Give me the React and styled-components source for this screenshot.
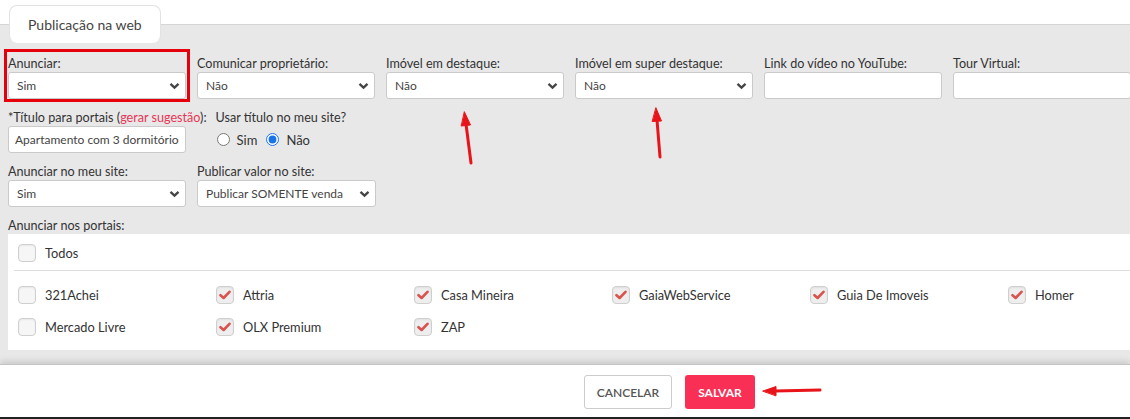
import React from "react";
import styled, { createGlobalStyle, css } from "styled-components";

const GlobalStyle = createGlobalStyle`
  body {
    margin: 0;
    background: #ffffff;
    font-family: Lato, "Open Sans", Arial, sans-serif;
  }
`;

const portals = [
  { name: "321Achei", checked: false },
  { name: "Attria", checked: true },
  { name: "Casa Mineira", checked: true },
  { name: "GaiaWebService", checked: true },
  { name: "Guia De Imoveis", checked: true },
  { name: "Homer", checked: true },
  { name: "Mercado Livre", checked: false },
  { name: "OLX Premium", checked: true },
  { name: "ZAP", checked: true },
];

const Chevron = () => (
  <svg width="11" height="8" viewBox="0 0 11 8">
    <polyline
      points="1.5,1.8 5.5,5.6 9.5,1.8"
      fill="none"
      stroke="#444"
      strokeWidth="2.3"
    />
  </svg>
);

const Select = ({ value, width }) => (
  <SelectBox $width={width}>
    <span>{value}</span>
    <Chevron />
  </SelectBox>
);

const Check = ({ checked }) => (
  <CheckBox $checked={checked}>
    {checked && (
      <svg width="12" height="10" viewBox="0 0 12 10">
        <path
          d="M1.5 5.2 L4.6 8 L10.5 1.8"
          fill="none"
          stroke="#d9534f"
          strokeWidth="2.6"
          strokeLinecap="round"
          strokeLinejoin="round"
        />
      </svg>
    )}
  </CheckBox>
);

const App = () => {
  return (
    <Page>
      <GlobalStyle />
      <TabBar>
        <Tab>Publicação na web</Tab>
      </TabBar>

      <Panel>
        <Row>
          <Field $highlight>
            <Label>Anunciar:</Label>
            <Select value="Sim" />
          </Field>
          <Field>
            <Label>Comunicar proprietário:</Label>
            <Select value="Não" />
          </Field>
          <Field>
            <Label>Imóvel em destaque:</Label>
            <Select value="Não" />
          </Field>
          <Field>
            <Label>Imóvel em super destaque:</Label>
            <Select value="Não" />
          </Field>
          <Field>
            <Label>Link do vídeo no YouTube:</Label>
            <TextBox />
          </Field>
          <Field>
            <Label>Tour Virtual:</Label>
            <TextBox />
          </Field>
        </Row>

        <Row>
          <Field $auto>
            <Label>
              *Título para portais (<Suggest>gerar sugestão</Suggest>):
            </Label>
            <TextBox defaultValue="Apartamento com 3 dormitórios à venda, 98 m²" />
          </Field>
          <Field $auto $shift>
            <Label>Usar título no meu site?</Label>
            <RadioRow>
              <RadioLabel>
                <Radio type="radio" name="usar" />
                Sim
              </RadioLabel>
              <RadioLabel>
                <Radio type="radio" name="usar" defaultChecked />
                Não
              </RadioLabel>
            </RadioRow>
          </Field>
        </Row>

        <Row>
          <Field>
            <Label>Anunciar no meu site:</Label>
            <Select value="Sim" />
          </Field>
          <Field>
            <Label>Publicar valor no site:</Label>
            <Select value="Publicar SOMENTE venda" width={179} />
          </Field>
        </Row>

        <Label>Anunciar nos portais:</Label>
        <PortalBox>
          <TodosRow>
            <CheckItem>
              <Check checked={false} />
              Todos
            </CheckItem>
          </TodosRow>
          <PortalGrid>
            {portals.map((p) => (
              <CheckItem key={p.name}>
                <Check checked={p.checked} />
                {p.name}
              </CheckItem>
            ))}
          </PortalGrid>
        </PortalBox>
        <HiddenLabel>Descrição para os portais (texto exibido no anúncio):</HiddenLabel>
      </Panel>

      <Footer>
        <CancelButton>Cancelar</CancelButton>
        <SaveButton>Salvar</SaveButton>
      </Footer>

      <Annotations width="1130" height="419" viewBox="0 0 1130 419">
        <g stroke="#e8141a" strokeWidth="3" fill="#e8141a" strokeLinecap="round">
          <line x1="471" y1="163" x2="466" y2="124" />
          <polygon points="464.5,112 470.5,125 461.5,126" strokeWidth="1" />
          <line x1="660" y1="157" x2="657" y2="120" />
          <polygon points="656,108 661.5,121 652.5,121.5" strokeWidth="1" />
          <line x1="820" y1="390" x2="775" y2="391" />
          <polygon points="763,391 776,386.5 776,395.5" strokeWidth="1" />
        </g>
      </Annotations>
    </Page>
  );
};

const Page = styled.div`
  position: relative;
  display: flex;
  flex-direction: column;
  width: 1130px;
  height: 419px;
  overflow: hidden;
`;

const TabBar = styled.div`
  display: flex;
  height: 24px;
  padding: 5px 0 0 9px;
  box-sizing: border-box;
`;

const Tab = styled.div`
  position: relative;
  z-index: 1;
  height: 38px;
  padding: 0 18px;
  display: flex;
  align-items: center;
  background: #ffffff;
  border: 1px solid #e2e2e2;
  border-bottom: none;
  border-radius: 8px;
  box-sizing: border-box;
  font-size: 14px;
  color: #444;
`;

const Panel = styled.div`
  flex: 1;
  min-height: 0;
  overflow: hidden;
  background: #e8e8e8;
  border-top: 1px solid #d6d6d6;
  padding: 30px 0 0 8px;
  box-sizing: border-box;
`;

const Row = styled.div`
  display: flex;
  gap: 11px;
  margin-bottom: 10px;
`;

const Field = styled.div`
  position: relative;
  display: flex;
  flex-direction: column;
  flex-shrink: 0;
  width: ${(p) => (p.$auto ? "auto" : "178px")};
  margin-left: ${(p) => (p.$shift ? "-2px" : "0")};

  ${(p) =>
    p.$highlight &&
    css`
      &::after {
        content: "";
        position: absolute;
        top: -6px;
        left: -4px;
        right: -4px;
        bottom: -3px;
        border: 3px solid #e5000b;
        pointer-events: none;
      }
    `}
`;

const Label = styled.div`
  height: 17px;
  line-height: 17px;
  font-size: 12.6px;
  color: #333;
  white-space: nowrap;
`;

const Suggest = styled.span`
  color: #e63757;
`;

const SelectBox = styled.div`
  width: ${(p) => (p.$width ? `${p.$width}px` : "178px")};
  height: 27px;
  display: flex;
  align-items: center;
  justify-content: space-between;
  padding: 0 5px 0 8px;
  box-sizing: border-box;
  background: #ffffff;
  border: 1px solid #cacaca;
  border-radius: 3px;
  font-size: 12px;
  color: #444;
  white-space: nowrap;
`;

const TextBox = styled.input.attrs({ type: "text" })`
  width: 178px;
  height: 27px;
  padding: 0 6px;
  box-sizing: border-box;
  background: #ffffff;
  border: 1px solid #cacaca;
  border-radius: 3px;
  font-family: inherit;
  font-size: 12px;
  color: #444;
  outline: none;
`;

const RadioRow = styled.div`
  display: flex;
  align-items: center;
  gap: 9px;
  height: 27px;
  padding-left: 1px;
`;

const RadioLabel = styled.label`
  display: flex;
  align-items: center;
  gap: 7px;
  font-size: 13px;
  color: #333;
`;

const Radio = styled.input`
  margin: 0;
  width: 13px;
  height: 13px;
  accent-color: #1a73e8;
`;

const PortalBox = styled.div`
  background: #ffffff;
  padding: 0 0 7px 6px;
`;

const TodosRow = styled.div`
  height: 37px;
  display: flex;
  align-items: center;
  padding: 2px 0 0 4px;
  box-sizing: border-box;
  border-bottom: 1px solid #dddddd;
`;

const PortalGrid = styled.div`
  display: grid;
  grid-template-columns: repeat(6, 198px);
  grid-auto-rows: 32px;
  padding: 8px 0 0 4px;
`;

const CheckItem = styled.div`
  display: flex;
  align-items: center;
  gap: 9px;
  font-size: 12.8px;
  color: #333;
  white-space: nowrap;
`;

const CheckBox = styled.span`
  width: 18px;
  height: 18px;
  box-sizing: border-box;
  display: inline-flex;
  align-items: center;
  justify-content: center;
  border: 1px solid #cfcfcf;
  border-radius: 4px;
  background: ${(p) => (p.$checked ? "#eeeeee" : "#f6f6f6")};
  box-shadow: inset 0 1px 2px rgba(0, 0, 0, 0.06);
`;

const HiddenLabel = styled(Label)`
  margin-top: 12px;
  color: #666;
`;

const Footer = styled.div`
  position: relative;
  z-index: 1;
  height: 55px;
  display: flex;
  align-items: flex-start;
  gap: 13px;
  padding: 10px 0 0 584px;
  box-sizing: border-box;
  background: #ffffff;
  border-top: 1px solid #c4c4c4;
  border-bottom: 2px solid #222;
  box-shadow: 0 -3px 6px rgba(0, 0, 0, 0.12);
`;

const buttonBase = css`
  height: 34px;
  box-sizing: border-box;
  border-radius: 3px;
  font-family: inherit;
  font-size: 12px;
  font-weight: 700;
  text-transform: uppercase;
  display: flex;
  align-items: center;
  justify-content: center;
`;

const CancelButton = styled.button`
  ${buttonBase}
  width: 88px;
  background: #ffffff;
  border: 1px solid #cccccc;
  color: #555;
  font-weight: 600;
`;

const SaveButton = styled.button`
  ${buttonBase}
  width: 70px;
  background: #fa2f56;
  border: none;
  color: #ffffff;
`;

const Annotations = styled.svg`
  position: absolute;
  top: 0;
  left: 0;
  z-index: 2;
  pointer-events: none;
`;

export default App;
